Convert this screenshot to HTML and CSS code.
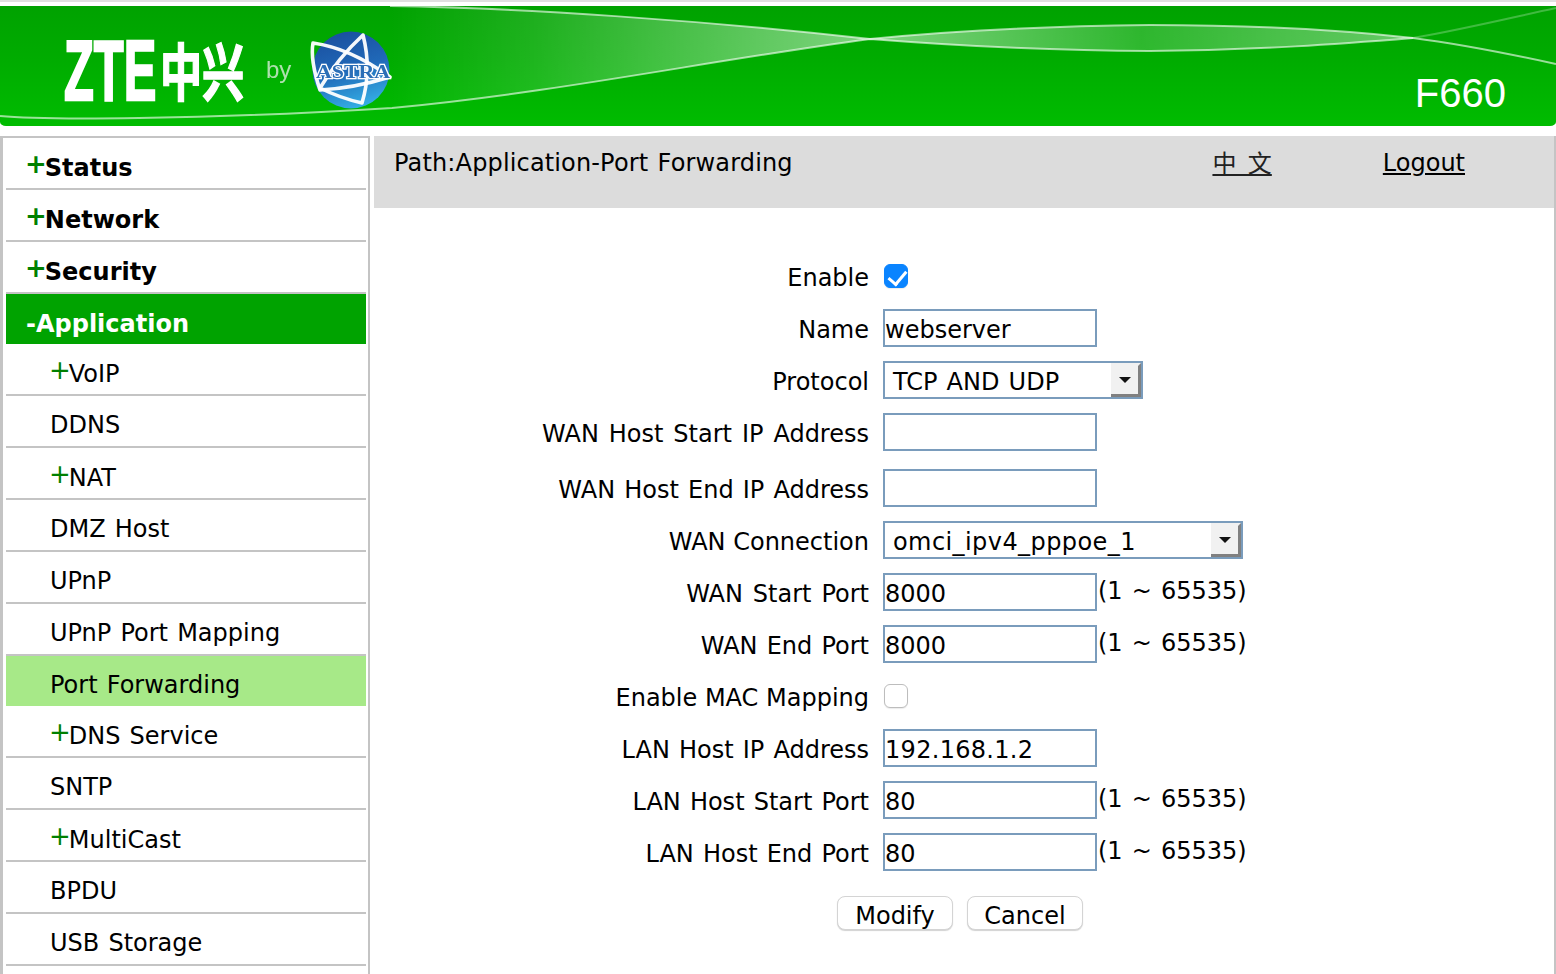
FILE: index.html
```html
<!DOCTYPE html>
<html lang="en">
<head>
<meta charset="utf-8">
<title>F660 Port Forwarding</title>
<link rel="stylesheet" href="styles.css">
</head>
<body>
<header class="banner">
  <svg class="waves" viewBox="0 6 1556 120" preserveAspectRatio="none" aria-hidden="true">
    <defs>
      <linearGradient id="ribbon" x1="0" x2="1" y1="0" y2="0">
        <stop offset="0" stop-color="#fff" stop-opacity="0"/>
        <stop offset="0.3" stop-color="#fff" stop-opacity="0.12"/>
        <stop offset="1" stop-color="#fff" stop-opacity="0.5"/>
      </linearGradient>
      <linearGradient id="ribbon2" x1="0" x2="1" y1="0" y2="0">
        <stop offset="0" stop-color="#fff" stop-opacity="0.5"/>
        <stop offset="0.5" stop-color="#fff" stop-opacity="0.18"/>
        <stop offset="1" stop-color="#fff" stop-opacity="0.4"/>
      </linearGradient>
    </defs>
    <path d="M390 6 C520 8 700 20 870 39 C700 62 560 92 392 108 Z" fill="url(#ribbon)"/>
    <path d="M870 39 C960 30 1060 26 1150 25 C1260 25 1340 30 1413 38 C1340 44 1260 50 1150 51 C1060 51 960 46 870 39 Z" fill="url(#ribbon2)"/>
    <path class="strand" d="M0 116 C40 120 200 120 392 108 C560 92 700 62 870 39 C960 46 1060 51 1150 51 C1260 50 1340 44 1413 38"/>
    <path class="strand" d="M390 6 C520 8 700 20 870 39 C960 30 1060 26 1150 25 C1260 25 1340 30 1413 38 C1460 44 1510 54 1556 64"/>
    <path class="strand faint" d="M1413 38 C1460 30 1510 18 1556 8"/>
  </svg>
  <div class="brand">
    <span class="zte">ZTE</span>
    <span class="zx">中</span>
    <span class="zx">兴</span>
    <span class="by">by</span>
    <svg class="astra" viewBox="0 0 100 95" role="img" aria-label="Astra">
      <defs>
        <linearGradient id="globe" x1="0.3" y1="0" x2="0.6" y2="1">
          <stop offset="0" stop-color="#1a4f9f"/>
          <stop offset="0.5" stop-color="#2069b8"/>
          <stop offset="1" stop-color="#35b0e6"/>
        </linearGradient>
      </defs>
      <circle cx="51" cy="50" r="38.5" fill="url(#globe)"/>
      <path class="star" d="M13 23 Q50 28 90 57 Q55 68 20 70 Q10 40 13 23 Z"/>
      <path class="star" d="M63 15 Q38 38 20 68 Q40 78 62 83 Q72 50 63 15 Z"/>
      <text class="astra-name" x="16" y="58" textLength="74" lengthAdjust="spacingAndGlyphs">ASTRA</text>
    </svg>
  </div>
  <div class="model">F660</div>
</header>

<div class="layout">
  <nav class="side">
    <a class="item top"><span class="sign">+</span>Status</a>
    <a class="item top"><span class="sign">+</span>Network</a>
    <a class="item top"><span class="sign">+</span>Security</a>
    <a class="item top open">-Application</a>
    <a class="item sub plus"><span class="sign">+</span>VoIP</a>
    <a class="item sub">DDNS</a>
    <a class="item sub plus"><span class="sign">+</span>NAT</a>
    <a class="item sub">DMZ Host</a>
    <a class="item sub">UPnP</a>
    <a class="item sub">UPnP Port Mapping</a>
    <a class="item sub current">Port Forwarding</a>
    <a class="item sub plus"><span class="sign">+</span>DNS Service</a>
    <a class="item sub">SNTP</a>
    <a class="item sub plus"><span class="sign">+</span>MultiCast</a>
    <a class="item sub">BPDU</a>
    <a class="item sub">USB Storage</a>
  </nav>

  <main class="content">
    <div class="pathbar">
      <span class="path">Path:Application-Port Forwarding</span>
      <a class="link lang">中 文</a>
      <a class="link logout">Logout</a>
    </div>
    <form class="form">
      <div class="row"><label class="lbl">Enable</label><div class="ctl"><input class="check" type="checkbox" checked></div></div>
      <div class="row"><label class="lbl">Name</label><div class="ctl"><input class="field" type="text" value="webserver"></div></div>
      <div class="row"><label class="lbl">Protocol</label><div class="ctl"><div class="select short"><span class="sel-val">TCP AND UDP</span><span class="sel-btn"><i class="arrow"></i></span></div></div></div>
      <div class="row"><label class="lbl wide">WAN Host Start IP Address</label><div class="ctl"><input class="field" type="text"></div></div>
      <div class="row tall"><label class="lbl">WAN Host End IP Address</label><div class="ctl"><input class="field" type="text"></div></div>
      <div class="row"><label class="lbl tight">WAN Connection</label><div class="ctl"><div class="select long"><span class="sel-val spaced">omci_ipv4_pppoe_1</span><span class="sel-btn"><i class="arrow"></i></span></div></div></div>
      <div class="row"><label class="lbl wide">WAN Start Port</label><div class="ctl"><input class="field" type="text" value="8000"><span class="hint">(1 ~ 65535)</span></div></div>
      <div class="row"><label class="lbl">WAN End Port</label><div class="ctl"><input class="field" type="text" value="8000"><span class="hint">(1 ~ 65535)</span></div></div>
      <div class="row"><label class="lbl tight">Enable MAC Mapping</label><div class="ctl"><input class="check" type="checkbox"></div></div>
      <div class="row"><label class="lbl">LAN Host IP Address</label><div class="ctl"><input class="field ip" type="text" value="192.168.1.2"></div></div>
      <div class="row"><label class="lbl">LAN Host Start Port</label><div class="ctl"><input class="field" type="text" value="80"><span class="hint">(1 ~ 65535)</span></div></div>
      <div class="row"><label class="lbl">LAN Host End Port</label><div class="ctl"><input class="field" type="text" value="80"><span class="hint">(1 ~ 65535)</span></div></div>
      <div class="actions">
        <button class="btn" type="button">Modify</button>
        <button class="btn" type="button">Cancel</button>
      </div>
    </form>
  </main>
</div>
</body>
</html>
```
FILE: styles.css
```css
* { box-sizing: border-box; }
html, body { margin: 0; padding: 0; }
body {
  width: 1556px;
  height: 974px;
  overflow: hidden;
  background: #fff;
  color: #000;
  font: 24px/1.2 "DejaVu Sans", Verdana, sans-serif;
  word-spacing: 1.5px;
  border-top: 2px solid #e0e0e0;
  padding-top: 4px;
}

/* Banner */
.banner {
  position: relative;
  height: 120px;
  margin-bottom: 10px;
  display: flex;
  align-items: flex-start;
  justify-content: space-between;
  background: linear-gradient(180deg, #00a200 0%, #00ac00 45%, #00bc00 100%);
  border-radius: 0 0 6px 6px / 0 0 4px 4px;
  overflow: hidden;
}
.waves { position: absolute; inset: 0; width: 100%; height: 100%; filter: blur(0.6px); }
.strand { fill: none; stroke: #fff; stroke-opacity: 0.6; stroke-width: 2; }
.strand.faint { stroke-opacity: 0.25; }
.brand {
  position: relative;
  display: flex;
  align-items: flex-start;
  padding: 29px 0 0 64px;
  color: #fff;
  filter: blur(0.5px);
}
.zte {
  width: 96px;
  height: 72px;
  font: 700 85px/72px "Liberation Sans", Arial, sans-serif;
  transform: scaleX(0.575);
  transform-origin: 0 50%;
  -webkit-text-stroke: 2.5px #fff;
}
.zx {
  width: 42px;
  height: 72px;
  margin-top: -2px;
  font: 700 62px/72px "Noto Sans CJK SC", sans-serif;
  transform: scaleX(0.68);
  transform-origin: 0 50%;
  -webkit-text-stroke: 1.5px #fff;
}
.by {
  margin: 20px 0 0 22px;
  width: 46px;
  font: 24px/30px "Liberation Sans", Arial, sans-serif;
  color: #aee0ae;
}
.astra { width: 100px; height: 95px; margin: -15px 0 0 -12px; flex: none; }
.star { fill: none; stroke: #fff; stroke-width: 3.6; stroke-linejoin: round; opacity: .95; }
.astra-name {
  font: 700 19px "Liberation Serif", serif;
  fill: #2b6fb7;
  stroke: #fff;
  stroke-width: 2.4;
  paint-order: stroke;
}
.model {
  position: relative;
  margin: 64px 50px 0 0;
  color: #fff;
  font: 40px/46px "Liberation Sans", Arial, sans-serif;
}

/* Layout */
.layout { display: flex; gap: 4px; height: 838px; }

/* Sidebar */
.side {
  width: 370px;
  flex: none;
  padding: 0 2px 0 3px;
  border: solid #c4c4c4;
  border-width: 2px 2px 0 3px;
  display: flex;
  flex-direction: column;
}
.item {
  height: 52px;
  flex: none;
  border-bottom: 2px solid #c4c4c4;
  display: flex;
  align-items: center;
  padding-top: 10px;
  color: #000;
}
.top { padding-left: 20px; font-weight: 700; }
.sub { padding-left: 44px; padding-top: 8px; white-space: pre; }
.sub.plus { padding-top: 10px; }
.sign {
  font-size: 26px;
  line-height: 26px;
  margin: 0 -2px 0 -1px;
  color: #008000;
  position: relative;
  top: -4px;
}
.open {
  height: 50px;
  border-bottom: 0;
  background: #00a300;
  color: #fff;
}
.current { height: 50px; border-bottom: 0; background: #a7e988; }

/* Main */
.content { flex: 1; min-width: 0; border-right: 2px solid #c4c4c4; }
.pathbar {
  height: 72px;
  background: #dcdcdc;
  display: flex;
  align-items: flex-start;
  padding: 13px 89px 0 20px;
}
.path { flex: 1; letter-spacing: 0.15px; }
.link { color: #000; text-decoration: underline; }
.lang {
  font-family: "Noto Sans CJK SC", sans-serif;
  margin: -2px 111px 0 0;
  color: #222;
  line-height: 29px;
  word-spacing: 6px;
}

/* Form */
.form { padding-top: 42px; }
.row {
  height: 52px;
  display: grid;
  grid-template-columns: 495px 1fr;
  column-gap: 14px;
  align-items: center;
}
.row.tall { height: 56px; padding-top: 4px; }
.lbl { text-align: right; white-space: nowrap; position: relative; top: 2px; }
.lbl.wide { word-spacing: 2.3px; }
.lbl.tight { word-spacing: 0; }
.ctl { display: flex; align-items: center; }
.field {
  width: 214px;
  height: 38px;
  border: 2px solid #7a9cbc;
  border-radius: 0;
  padding: 4px 0 0;
  margin: 0;
  background: #fff;
  color: #000;
  font: inherit;
  outline: none;
}
.field.ip { letter-spacing: 0.3px; }
.hint { position: relative; top: -1px; margin-left: 1px; white-space: nowrap; }
.select {
  height: 38px;
  border: 2px solid #7a9cbc;
  display: flex;
  align-items: center;
  justify-content: space-between;
  background: #fff;
}
.select.short { width: 260px; }
.select.long { width: 360px; }
.sel-val { padding: 4px 0 0 8px; white-space: nowrap; }
.sel-val.spaced { letter-spacing: 0.42px; }
.sel-btn {
  width: 30px;
  height: 34px;
  flex: none;
  display: flex;
  align-items: center;
  justify-content: center;
  background: #f1f1f1;
  border: solid;
  border-width: 3px 3px 3px 0;
  border-color: #f1f1f1 #808080 #808080 #f1f1f1;
}
.arrow {
  width: 0;
  height: 0;
  border-style: solid;
  border-width: 6px 6.5px 0;
  border-color: #111 transparent transparent;
}
.check {
  appearance: none;
  -webkit-appearance: none;
  position: relative;
  width: 24px;
  height: 24px;
  margin: 0 0 0 1px;
  border: 1px solid #bdbdbd;
  border-radius: 6px;
  background: #fff;
  box-shadow: 0 1px 1px rgba(0,0,0,.08);
}
.check:checked { background: #0a84ff; border-color: #0a84ff; }
.check:checked::after {
  content: "";
  position: absolute;
  left: 7px;
  top: 2px;
  width: 8px;
  height: 15px;
  border: solid #fff;
  border-width: 0 3px 3px 0;
  transform: rotate(40deg);
}
.actions { display: flex; gap: 14px; padding: 18px 0 0 463px; }
.btn {
  width: 116px;
  height: 34px;
  padding: 6px 0 0;
  background: #fff;
  border: 1px solid #d4d4d4;
  border-radius: 8px;
  box-shadow: 0 1px 1px rgba(0,0,0,.18);
  color: #000;
  font: inherit;
  line-height: 26px;
}
```
